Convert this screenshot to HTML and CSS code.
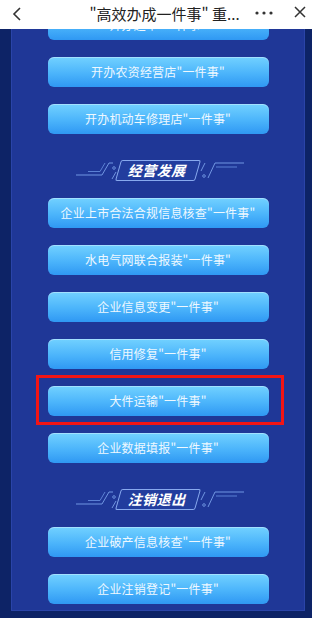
FILE: index.html
```html
<!DOCTYPE html>
<html lang="zh-CN">
    <head>
        <meta charset="UTF-8">
        <title>高效办成一件事</title>
        <link rel="stylesheet" href="styles.css">
    </head>
    <body>
        <div class="topbar">
            <svg class="back" width="10" height="14" viewBox="0 0 10 14">
                <polyline points="8,1 2,7 8,13" fill="none" stroke="#333" stroke-width="1.6"/>
            </svg>
            <div class="title">"高效办成一件事" 重...</div>
            <svg class="more" width="18" height="4" viewBox="0 0 18 4">
                <circle cx="2" cy="2" r="1.6" fill="#333"/>
                <circle cx="9" cy="2" r="1.6" fill="#333"/>
                <circle cx="16" cy="2" r="1.6" fill="#333"/>
            </svg>
            <svg class="close" width="12" height="12" viewBox="0 0 12 12">
                <path d="M1 1 L11 11 M11 1 L1 11" stroke="#333" stroke-width="1.5"/>
            </svg>
        </div>

        <div class="viewport">
            <div class="frame">
                <div class="panel">
                    <div class="list">
                        <div class="item">开办超市"一件事"</div>
                        <div class="item">开办农资经营店"一件事"</div>
                        <div class="item">开办机动车修理店"一件事"</div>

                        <div class="heading">
                            <svg width="42" height="22" viewBox="0 0 42 22">
                                <path d="M0 16 H26 L33 4 H37" fill="none" stroke="#7196e2" stroke-width="1"/>
                                <path d="M12 12.5 H24 L29 4" fill="none" stroke="#5b80d4" stroke-width="1"/>
                                <circle cx="38" cy="9" r="1.3" fill="none" stroke="#7196e2" stroke-width="0.9"/>
                                <path d="M40 13 L36 20" stroke="#7196e2" stroke-width="1"/>
                            </svg>
                            <span class="badge">经营发展</span>
                            <svg width="45" height="22" viewBox="0 0 45 22">
                                <path d="M6 4 L2 12" stroke="#7196e2" stroke-width="1"/>
                                <circle cx="5" cy="17" r="1.3" fill="none" stroke="#7196e2" stroke-width="0.9"/>
                                <path d="M9 19 L16 4 H45" fill="none" stroke="#7196e2" stroke-width="1"/>
                                <path d="M17 8 H38" fill="none" stroke="#5b80d4" stroke-width="1"/>
                            </svg>
                        </div>

                        <div class="item">企业上市合法合规信息核查"一件事"</div>
                        <div class="item">水电气网联合报装"一件事"</div>
                        <div class="item">企业信息变更"一件事"</div>
                        <div class="item">信用修复"一件事"</div>
                        <div class="item marked">大件运输"一件事"</div>
                        <div class="item">企业数据填报"一件事"</div>

                        <div class="heading">
                            <svg width="42" height="22" viewBox="0 0 42 22">
                                <path d="M0 16 H26 L33 4 H37" fill="none" stroke="#7196e2" stroke-width="1"/>
                                <path d="M12 12.5 H24 L29 4" fill="none" stroke="#5b80d4" stroke-width="1"/>
                                <circle cx="38" cy="9" r="1.3" fill="none" stroke="#7196e2" stroke-width="0.9"/>
                                <path d="M40 13 L36 20" stroke="#7196e2" stroke-width="1"/>
                            </svg>
                            <span class="badge">注销退出</span>
                            <svg width="45" height="22" viewBox="0 0 45 22">
                                <path d="M6 4 L2 12" stroke="#7196e2" stroke-width="1"/>
                                <circle cx="5" cy="17" r="1.3" fill="none" stroke="#7196e2" stroke-width="0.9"/>
                                <path d="M9 19 L16 4 H45" fill="none" stroke="#7196e2" stroke-width="1"/>
                                <path d="M17 8 H38" fill="none" stroke="#5b80d4" stroke-width="1"/>
                            </svg>
                        </div>

                        <div class="item">企业破产信息核查"一件事"</div>
                        <div class="item">企业注销登记"一件事"</div>
                    </div>
                </div>
            </div>
        </div>
    </body>
</html>
```

FILE: styles.css
```css
body{
    margin: 0;
    width: 312px;
    height: 618px;
    overflow: hidden;
    font-family: "Noto Sans CJK SC", "Noto Sans", sans-serif;
    background: #0d2366;
}
.topbar{
    height: 29px;
    background: #fff;
    display: flex;
    align-items: center;
    position: relative;
    z-index: 2;
}
.back{
    margin-left: 12px;
    margin-top: -2px;
}
.title{
    flex: 1;
    text-align: center;
    font-size: 15px;
    color: #222;
    margin-left: 52px;
    margin-top: -3px;
    white-space: nowrap;
}
.more{
    margin-right: 21px;
    margin-top: -4px;
}
.close{
    margin-right: 6px;
    margin-top: -5px;
}
.viewport{
    height: 589px;
    overflow: hidden;
}
.frame{
    background: #0d2366;
    padding: 0 7px 7px 11px;
    margin-top: -19px;
}
.panel{
    background: #1f3797;
    padding: 0 0 7px;
    box-shadow: inset 1px 0 0 #2a44a8, inset -1px 0 0 #2a44a8, inset 0 -1px 0 #2a44a8;
}
.list{
    display: flex;
    flex-direction: column;
    align-items: center;
    gap: 17px;
}
.item{
    width: 221px;
    height: 30px;
    border-radius: 6px;
    background: linear-gradient(#72d1ff, #4bb4fb 55%, #2f98f3);
    box-shadow: inset 0 1px 0 rgba(255, 255, 255, .35);
    color: #eef8ff;
    font-size: 12px;
    line-height: 30px;
    text-align: center;
    letter-spacing: 0.2px;
    position: relative;
}
.item.marked::after{
    content: "";
    position: absolute;
    top: -11px;
    bottom: -9px;
    left: -12px;
    right: -15px;
    border: 3px solid #f21515;
}
.heading{
    height: 30px;
    display: flex;
    align-items: flex-end;
    justify-content: center;
    margin-left: 4px;
}
.badge{
    width: 78px;
    height: 19px;
    margin: 0 1px 0 0;
    border: 1px solid #88a9ee;
    border-radius: 2px;
    transform: skewX(-16deg);
    color: #fff;
    font-size: 14px;
    font-weight: bold;
    line-height: 19px;
    text-align: center;
    letter-spacing: 0.5px;
    background: rgba(40, 70, 170, .4);
}
```
